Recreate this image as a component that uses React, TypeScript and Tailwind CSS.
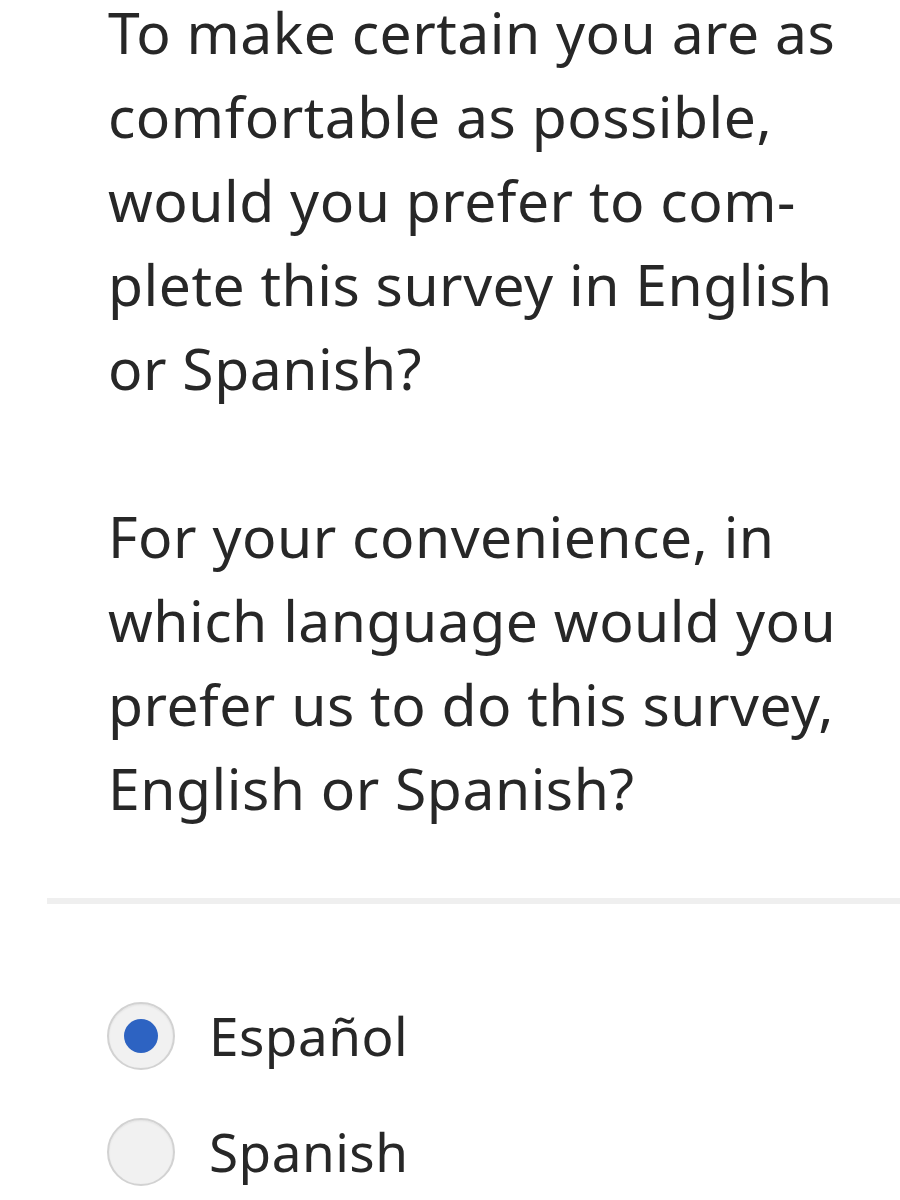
import { useState } from 'react'

const para1 = [
  'To make certain you are as',
  'comfortable as possible,',
  'would you prefer to com-',
  'plete this survey in English',
  'or Spanish?',
]

const para2 = [
  'For your convenience, in',
  'which language would you',
  'prefer us to do this survey,',
  'English or Spanish?',
]

const options = ['Español', 'Spanish']

export default function App() {
  const [choice, setChoice] = useState('Español')

  return (
    <div className="w-[900px] h-[1200px] overflow-hidden bg-white text-[#272727] font-['Noto_Sans',sans-serif]">
      <div className="pl-[108px] pr-4 text-[57px] leading-[64px] tracking-[0.5px] flex flex-col gap-[104px]">
        <div className="flex flex-col gap-[20px]">
          {para1.map((l) => (
            <div key={l} className="whitespace-nowrap">{l}</div>
          ))}
        </div>
        <div className="flex flex-col gap-[20px]">
          {para2.map((l) => (
            <div key={l} className="whitespace-nowrap">{l}</div>
          ))}
        </div>
      </div>

      <div className="ml-[47px] mt-[78px] h-[6px] bg-[#efefef]" />

      <div className="pl-[107px] pt-[98px] flex flex-col gap-[48px]">
        {options.map((o) => {
          const on = choice === o
          return (
            <label key={o} className="flex items-center gap-[34px] cursor-pointer" onClick={() => setChoice(o)}>
              <span className="h-[68px] w-[68px] rounded-full bg-[#f1f1f1] border-2 border-[#d2d2d2] shadow-[inset_0_1px_2px_rgba(0,0,0,0.06)] flex items-center justify-center">
                {on && <span className="h-[34px] w-[34px] rounded-full bg-[#2d63c2]" />}
              </span>
              <span className="text-[53px] leading-[68px] tracking-[0.5px]">{o}</span>
            </label>
          )
        })}
      </div>
    </div>
  )
}
